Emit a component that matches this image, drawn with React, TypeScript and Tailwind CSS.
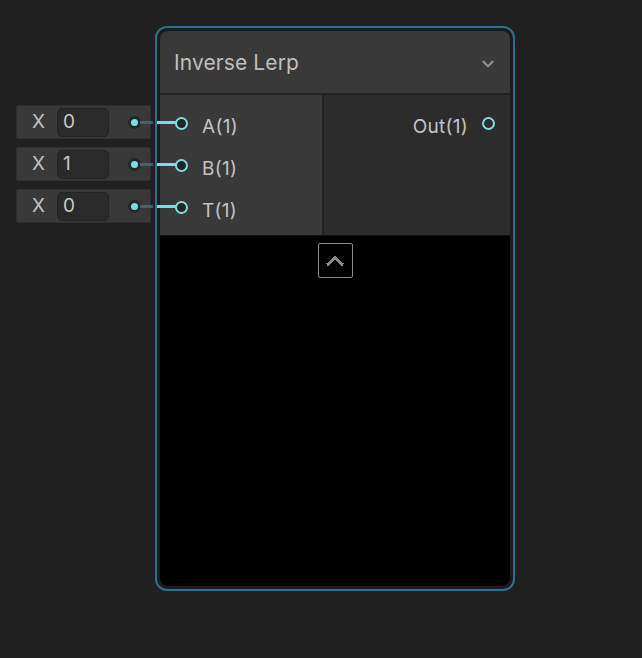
import { ChevronDown } from "lucide-react";

const inputs = [
	{ label: "A(1)", value: "0" },
	{ label: "B(1)", value: "1" },
	{ label: "T(1)", value: "0" },
];

function Port({ fill = "bg-[#242424]" }: { fill?: string }) {
	return (
		<div
			className={`w-[13px] h-[13px] rounded-full border-2 border-[#7adde6] ${fill} shrink-0`}
		/>
	);
}

function InputField({ value }: { value: string }) {
	return (
		<div className="relative h-[34px] w-[135px] flex items-center bg-[#393939] border border-[#303030] rounded-[2px]">
			<span className="w-[40px] pl-[15px] text-[19px] text-[#c4c4c4]">X</span>
			<div className="h-[29px] w-[52px] rounded-[5px] bg-[#2a2a2a] border border-[#222] flex items-center pl-[5px] text-[19px] text-[#c8c8c8]">
				{value}
			</div>
			{/* dot */}
			<div className="ml-[19px] w-[13px] h-[13px] rounded-full bg-[#262626] flex items-center justify-center">
				<div className="w-[7px] h-[7px] rounded-full bg-[#7adde6]" />
			</div>
			{/* wire */}
			<div className="absolute left-[123px] top-[15px] w-[13px] h-[3px] bg-[#476266] z-10" />
			<div className="absolute left-[140px] top-[15px] w-[20px] h-[3px] bg-[#7adde6] z-10" />
		</div>
	);
}

export default function App() {
	return (
		<div
			className="w-full h-[658px] bg-[#202020] flex items-start pl-[16px] pt-[26px] overflow-hidden"
			style={{ fontFamily: "Inter, 'Noto Sans', sans-serif" }}
		>
			{/* connected input fields */}
			<div className="mt-[79px] w-[135px] flex flex-col gap-[8px] relative z-10">
				{inputs.map((i) => (
					<InputField key={i.label} value={i.value} />
				))}
			</div>

			{/* node */}
			<div className="ml-[4px] w-[360px] h-[565px] rounded-[12px] border-2 border-[#2d6f93] bg-[#1b1b1b] p-[3px]">
				<div className="h-full rounded-[8px] overflow-hidden flex flex-col">
					<div className="h-[62px] bg-[#393939] flex items-center justify-between pl-[14px] pr-[13px] border-b-2 border-[#232323] box-content">
						<span className="mt-[2px] text-[21px] text-[#bfbfbf] tracking-[0.1px]">Inverse Lerp</span>
						<ChevronDown size={18} strokeWidth={3} className="text-[#8c8c8c] mt-[3px]" />
					</div>

					<div className="h-[141px] flex border-b border-[#111]">
						<div className="w-[164px] bg-[#393939] border-r-2 border-[#232323] pt-[7px] flex flex-col">
							{inputs.map((i) => (
								<div key={i.label} className="h-[42px] flex items-center pl-[15px]">
									<Port />
									<span className="ml-[14px] mt-[8px] text-[19px] tracking-[0.3px] text-[#c4c4c4]">{i.label}</span>
								</div>
							))}
						</div>
						<div className="flex-1 bg-[#2c2c2c] pt-[7px]">
							<div className="h-[42px] flex items-center justify-end pr-[15px]">
								<span className="mt-[8px] text-[19px] tracking-[0.3px] text-[#c4c4c4]">Out(1)</span>
								<div className="ml-[14px]">
									<Port fill="bg-[#2c2c2c]" />
								</div>
							</div>
						</div>
					</div>

					<div className="flex-1 bg-black flex justify-center pt-[7px]">
						<div className="w-[35px] h-[35px] border-[1.5px] border-[#8a8a8a] rounded-[2px] flex items-center justify-center">
							<svg width="20" height="14" viewBox="0 0 20 14" shapeRendering="crispEdges">
								<polyline points="2,11 10,4 18,11" fill="none" stroke="#8a8a8a" strokeWidth="3" />
							</svg>
						</div>
					</div>
				</div>
			</div>
		</div>
	);
}
